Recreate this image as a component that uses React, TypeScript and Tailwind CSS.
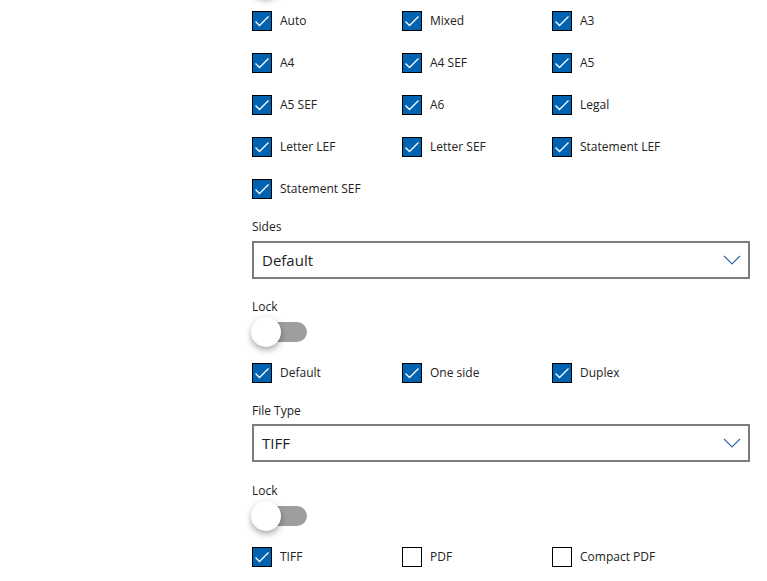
import React from "react";

function Check({ label, checked }: { label: string; checked: boolean }) {
  return (
    <div className="flex items-center h-5 gap-2">
      {checked ? (
        <div className="w-5 h-5 border border-black bg-[#0063b1] flex items-center justify-center shrink-0">
          <svg width="16" height="12" viewBox="0 0 16 12" fill="none">
            <path d="M1.5 6.5 L5.5 10.5 L14.5 1.5" stroke="white" strokeWidth="1.3" />
          </svg>
        </div>
      ) : (
        <div className="w-5 h-5 border border-black bg-white shrink-0" />
      )}
      <span className="text-[12px] leading-4 text-[#222]">{label}</span>
    </div>
  );
}

function Grid({ items }: { items: [string, boolean][] }) {
  return (
    <div className="grid grid-cols-[150px_150px_150px] gap-y-[22px]">
      {items.map(([l, c]) => (
        <Check key={l} label={l} checked={c} />
      ))}
    </div>
  );
}

function Toggle() {
  return (
    <div className="relative w-[56px] h-[30px]">
      <div className="absolute left-[13px] top-[5px] w-[42px] h-[20px] rounded-full bg-[#9e9e9e]" />
      <div className="absolute left-[-1px] top-0 w-[30px] h-[30px] rounded-full bg-white shadow-[0_3px_6px_rgba(0,0,0,0.35)]" />
    </div>
  );
}

function Select({ value }: { value: string }) {
  return (
    <div className="h-[38px] border-2 border-[#7d7d7d] flex items-center justify-between pl-[8px] pr-[7px]">
      <span className="text-[15px] text-[#222]">{value}</span>
      <svg width="18" height="10" viewBox="0 0 18 10" fill="none">
        <path d="M1 1 L9 9 L17 1" stroke="#2f67a6" strokeWidth="1.1" />
      </svg>
    </div>
  );
}

export default function App() {
  return (
    <div
      className="w-[767px] h-[581px] overflow-hidden bg-white pl-[252px] pr-[17px]"
      style={{ fontFamily: '"Open Sans", "Noto Sans", sans-serif' }}
    >
      <div className="mt-[-33px]">
        <Toggle />
      </div>
      <div className="mt-[14px]">
        <Grid
          items={[
            ["Auto", true],
            ["Mixed", true],
            ["A3", true],
            ["A4", true],
            ["A4 SEF", true],
            ["A5", true],
            ["A5 SEF", true],
            ["A6", true],
            ["Legal", true],
            ["Letter LEF", true],
            ["Letter SEF", true],
            ["Statement LEF", true],
            ["Statement SEF", true],
          ]}
        />
      </div>
      <div className="mt-[20px] text-[12px] leading-4 text-[#222]">Sides</div>
      <div className="mt-[6px]">
        <Select value="Default" />
      </div>
      <div className="mt-[20px] text-[12px] leading-4 text-[#222]">Lock</div>
      <div className="pt-[2px]">
        <Toggle />
      </div>
      <div className="mt-[16px]">
        <Grid
          items={[
            ["Default", true],
            ["One side", true],
            ["Duplex", true],
          ]}
        />
      </div>
      <div className="mt-[20px] text-[12px] leading-4 text-[#222]">File Type</div>
      <div className="mt-[5px]">
        <Select value="TIFF" />
      </div>
      <div className="mt-[21px] text-[12px] leading-4 text-[#222]">Lock</div>
      <div className="pt-[2px]">
        <Toggle />
      </div>
      <div className="mt-[16px]">
        <Grid
          items={[
            ["TIFF", true],
            ["PDF", false],
            ["Compact PDF", false],
          ]}
        />
      </div>
    </div>
  );
}
